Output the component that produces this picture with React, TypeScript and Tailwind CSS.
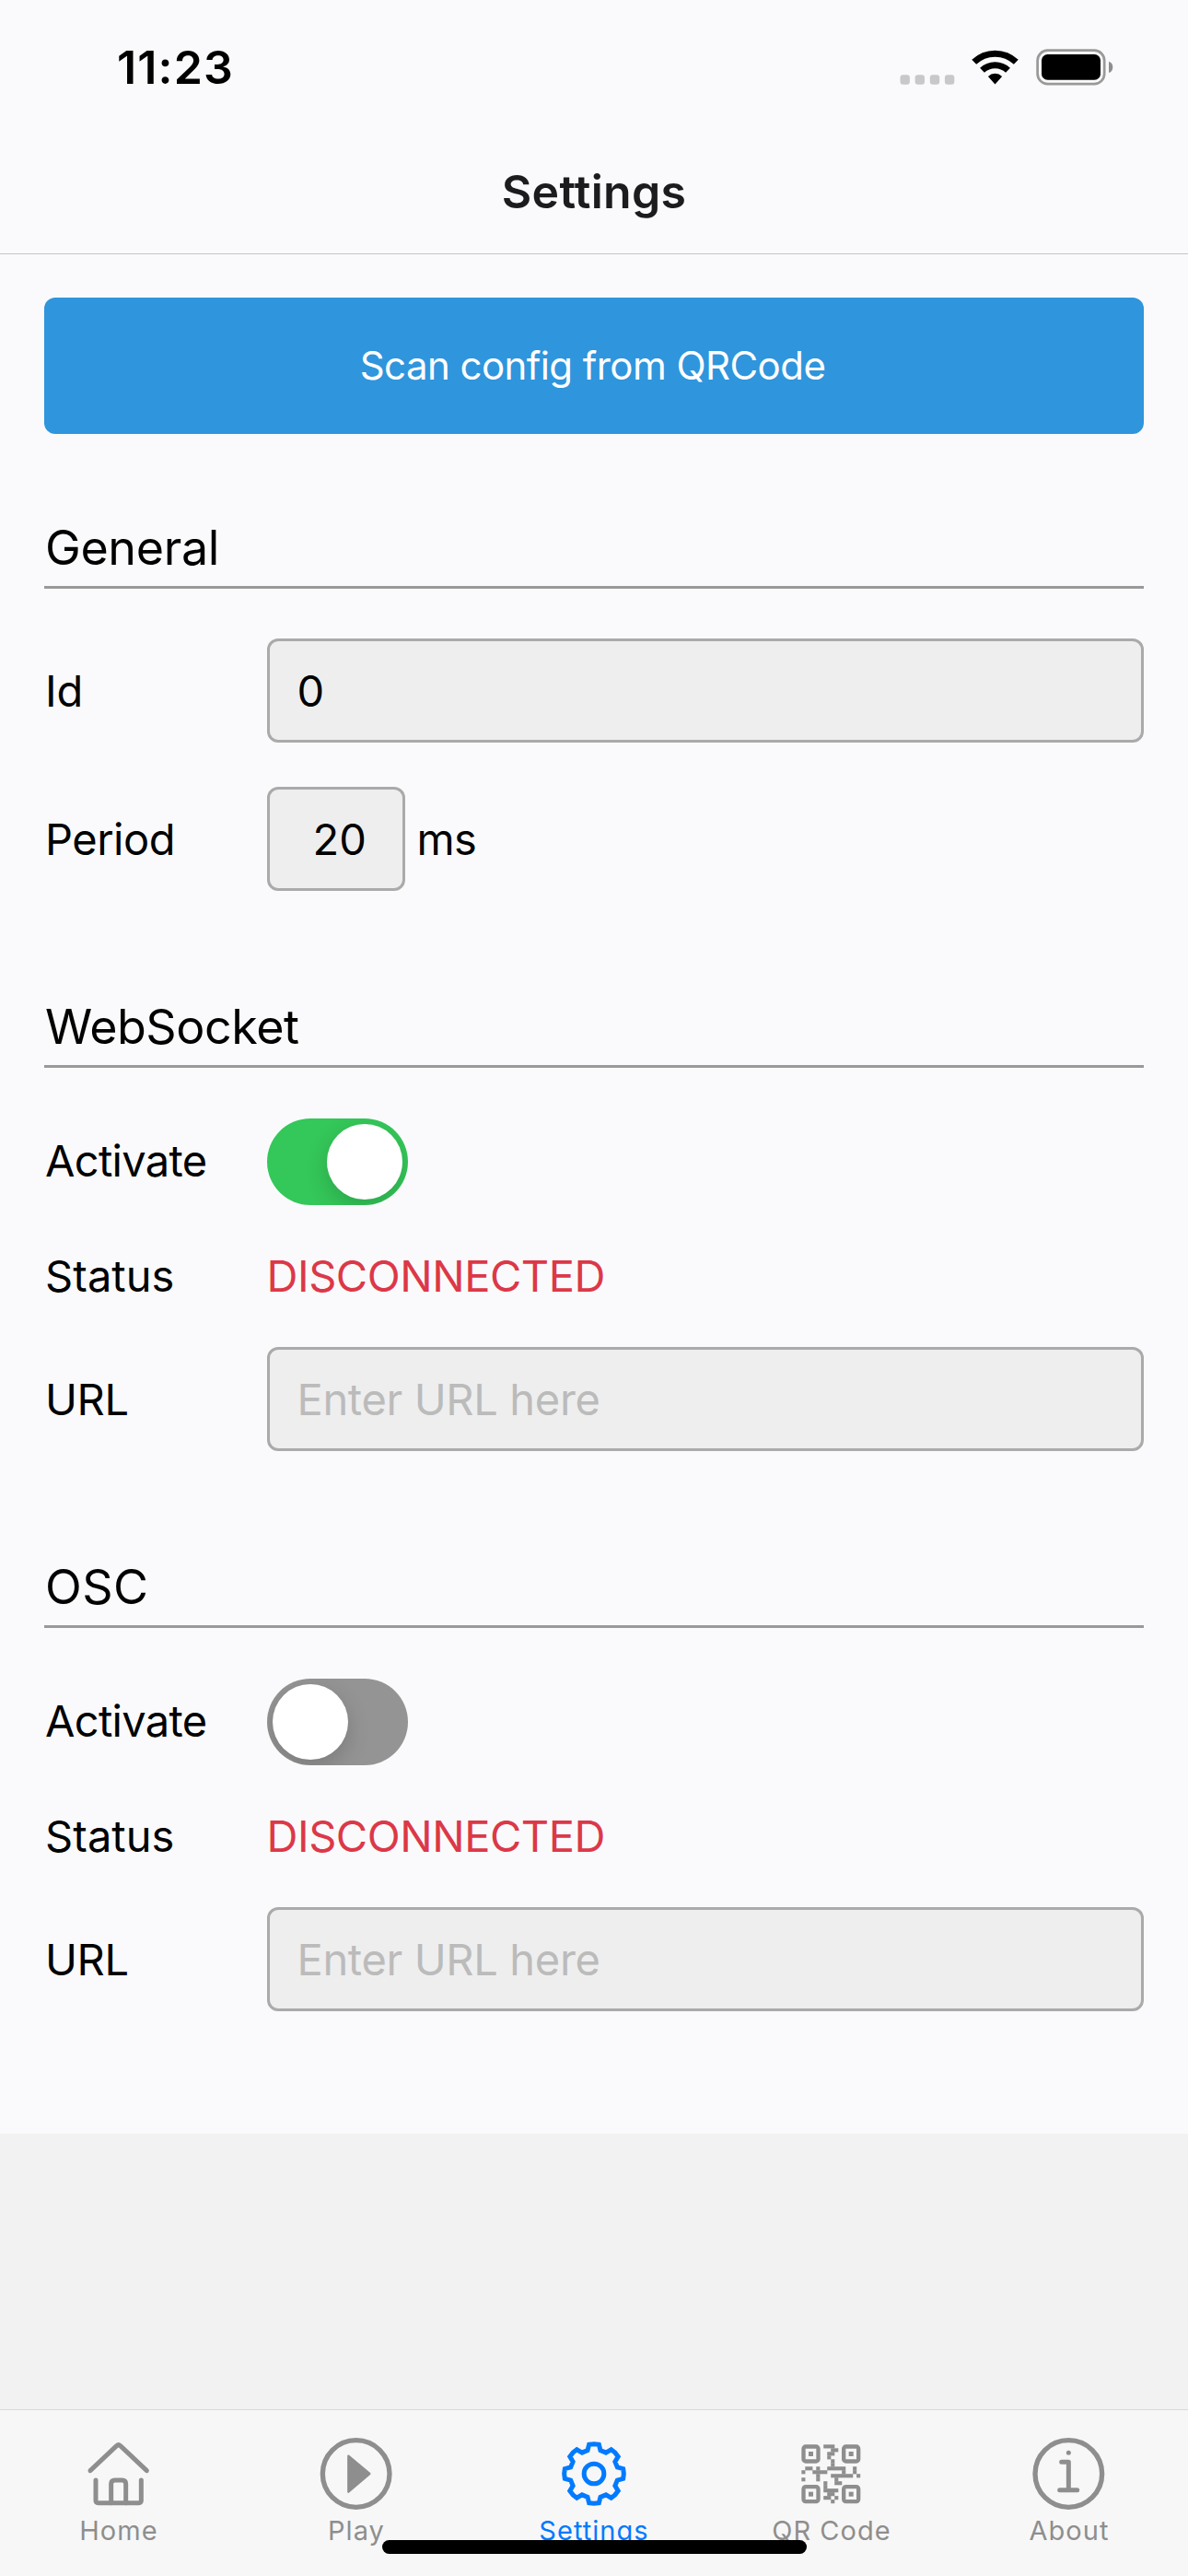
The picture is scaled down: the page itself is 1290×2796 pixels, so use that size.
import type { ReactNode } from "react";

function StatusIcons() {
  return (
    <svg width="232" height="40" viewBox="0 0 232 40" className="mb-px block">
      {[0.5, 16.6, 32.8, 48.9].map((x) => (
        <rect key={x} x={x} y="28.3" width="10.4" height="10.4" rx="3" fill="#c8c8ca" />
      ))}
      <g fill="none" stroke="#000" strokeWidth="7">
        <path d="M80.7 14.3A33 33 0 0 1 126.3 14.3" />
        <path d="M89.5 23.2A20.4 20.4 0 0 1 117.5 23.2" />
      </g>
      <path d="M95.9 29.9A11 11 0 0 1 111.1 29.9L103.5 38.5Z" fill="#000" />
      <rect x="149.6" y="1.7" width="72.6" height="36.4" rx="11" fill="none" stroke="#999" strokeWidth="2.7" />
      <rect x="154" y="6" width="64" height="27.7" rx="6.5" fill="#000" />
      <path d="M227 13.7a6.6 6.6 0 0 1 0 12.4Z" fill="#8e8e90" />
    </svg>
  );
}

function TabIcon({ children }: { children: ReactNode }) {
  return (
    <svg
      width="84"
      height="84"
      viewBox="-126 -126 252 252"
      className="block"
      fill="none"
      stroke="currentColor"
      strokeWidth="15"
      strokeLinecap="round"
      strokeLinejoin="round"
    >
      {children}
    </svg>
  );
}

function HomeIcon() {
  return (
    <TabIcon>
      <path d="M-93 -10L-7 -91Q-1 -97 5 -91L91 -10" />
      <path d="M-75 21V87Q-75 95 -67 95H65Q73 95 73 87V21" />
      <path d="M-25 95V33Q-25 21 -13 21H11Q23 21 23 33V95" />
    </TabIcon>
  );
}

function PlayIcon() {
  return (
    <TabIcon>
      <circle cx="-1" r="109" strokeWidth="16" />
      <path d="M-26 -58L43 0L-26 59Z" fill="currentColor" strokeWidth="7" />
    </TabIcon>
  );
}

const TOOTH = [
  [-21, -76],
  [-16, -95],
  [0, -97],
  [16, -95],
  [21, -76],
];

const GEAR_POINTS = Array.from({ length: 8 }, (_, i) => {
  const a = (i * Math.PI) / 4;
  return TOOTH.map(([x, y]) =>
    [x * Math.cos(a) - y * Math.sin(a), x * Math.sin(a) + y * Math.cos(a)]
      .map((v) => v.toFixed(1))
      .join(","),
  ).join(" ");
}).join(" ");

function GearIcon() {
  return (
    <TabIcon>
      <polygon points={GEAR_POINTS} strokeLinejoin="miter" />
      <circle r="32.500" />
    </TabIcon>
  );
}

const QR_FINDERS = [
  [0, 0],
  [131, 0],
  [0, 131],
  [131, 131],
];

// Runs of filled modules on the 16 x 16 grid: [row, first column, length]
const QR_RUNS = [
  [0, 6, 3],
  [1, 8, 2],
  [2, 7, 2],
  [3, 7, 1],
  [4, 8, 1],
  [5, 8, 1],
  [6, 1, 2],
  [6, 4, 1],
  [6, 7, 5],
  [6, 14, 1],
  [7, 0, 1],
  [7, 3, 4],
  [7, 11, 1],
  [7, 14, 1],
  [8, 4, 1],
  [8, 8, 6],
  [8, 15, 1],
  [9, 0, 1],
  [9, 4, 1],
  [9, 9, 1],
  [10, 6, 1],
  [10, 9, 2],
  [11, 6, 1],
  [12, 6, 4],
  [13, 7, 2],
  [14, 6, 2],
  [14, 9, 1],
  [15, 8, 1],
];

function QrIcon() {
  return (
    <TabIcon>
      <g transform="translate(-98 -95)">
        {QR_FINDERS.map(([x, y]) => (
          <g key={`${x}-${y}`} transform={`translate(${x} ${y})`}>
            <rect x="6.500" y="6.500" width="48" height="48" rx="7" strokeWidth="13" />
            <rect x="23" y="23" width="15" height="15" fill="currentColor" stroke="none" />
          </g>
        ))}
        {QR_RUNS.map(([row, col, len]) => (
          <rect
            key={`${row}-${col}`}
            x={col * 11.95}
            y={row * 11.95}
            width={len * 11.95 + 0.4}
            height="12.400"
            fill="currentColor"
            stroke="none"
          />
        ))}
      </g>
    </TabIcon>
  );
}

function InfoIcon() {
  return (
    <TabIcon>
      <g transform="translate(-2 0)">
        <circle r="109" strokeWidth="16" />
        <circle cy="-68" r="7.500" fill="currentColor" stroke="none" />
        <path d="M-23 -38H0V53M-29 53H28" />
      </g>
    </TabIcon>
  );
}

function Section({ title, tracking, children }: { title: string; tracking: string; children: ReactNode }) {
  return (
    <section className="flex flex-col">
      <h2
        className={`mb-[54px] flex h-[85px] items-center border-b-[3px] border-[#999] text-[52px] leading-none ${tracking}`}
      >
        {title}
      </h2>
      {children}
    </section>
  );
}

function Row({ label, tracking, children }: { label: string; tracking: string; children: ReactNode }) {
  return (
    <div className="flex items-center">
      <div className={`w-[241.5px] shrink-0 pb-px ${tracking}`}>{label}</div>
      {children}
    </div>
  );
}

const FIELD =
  "block h-[113px] rounded-[12px] border-[3px] border-[#aaa] bg-[#eee] leading-none outline-none placeholder:text-[#bbb] placeholder:opacity-100";

function Toggle({ on }: { on: boolean }) {
  return (
    <div
      className={`mt-[0.5px] -mb-[0.5px] flex h-[94px] w-[153.5px] items-center overflow-hidden rounded-full px-[6px] ${
        on ? "justify-end bg-[#34c759]" : "justify-start bg-[#949494]"
      }`}
    >
      <div className="size-[82px] rounded-full bg-white shadow-[0_9px_24px_rgba(0,0,0,0.17)]" />
    </div>
  );
}

function Connection({ title, tracking, on }: { title: string; tracking: string; on: boolean }) {
  return (
    <Section title={title} tracking={tracking}>
      <Row label="Activate" tracking="tracking-[-0.69px] pl-px">
        <Toggle on={on} />
      </Row>
      <div className="flex h-[155px] flex-col justify-center">
        <Row label="Status" tracking="tracking-[0.06px] pl-px">
          <div className="tracking-[-0.45px] text-[#dc3848]">DISCONNECTED</div>
        </Row>
      </div>
      <Row label="URL" tracking="tracking-[-0.36px] pl-px">
        <input
          className={`${FIELD} w-full min-w-0 flex-1 pl-[30px] tracking-[-0.34px]`}
          placeholder="Enter URL here"
        />
      </Row>
    </Section>
  );
}

function Tab({ label, icon, active }: { label: string; icon: ReactNode; active?: boolean }) {
  return (
    <div className={`flex w-[258px] flex-col items-center pt-[27px] ${active ? "text-[#007aff]" : "text-[#8e8e8e]"}`}>
      {icon}
      <div className="mt-[5px] text-[29px] leading-[30px] tracking-[1.05px]">{label}</div>
    </div>
  );
}

export default function App() {
  return (
    <div className="relative flex h-[2796px] w-[1290px] flex-col overflow-hidden bg-[#f2f2f2] font-['Inter',sans-serif] text-[47px] leading-none text-black">
      <header className="h-[276px] shrink-0 border-b border-[#c4c4c6] bg-[#fafafc]">
        <div className="flex h-[147px] items-center justify-between pr-[81px] pl-[127px]">
          <div className="pb-px text-[50px] font-semibold tracking-[1.16px]">11:23</div>
          <StatusIcons />
        </div>
        <h1 className="flex h-[122px] items-center justify-center text-[50px] font-semibold tracking-[0.27px] text-[#1c1c1e]">
          Settings
        </h1>
      </header>

      <main className="flex shrink-0 flex-col gap-[107px] bg-[#fafafc] px-[48px] pt-[47px] pb-[133px]">
        <button className="-mb-[24px] flex h-[148px] items-center justify-center rounded-[12px] bg-[#2f95dc] pr-[3px] text-[42px] leading-none tracking-[-0.56px] text-white">
          Scan config from QRCode
        </button>

        <Section title="General" tracking="tracking-[-0.37px] pl-px">
          <Row label="Id" tracking="tracking-[-0.12px] pl-px">
            <input className={`${FIELD} w-full min-w-0 flex-1 pl-[30px]`} defaultValue="0" />
          </Row>
          <div className="h-[48px]" />
          <Row label="Period" tracking="tracking-[-0.49px] pl-px">
            <input className={`${FIELD} w-[150px] pl-[47px]`} defaultValue="20" />
            <div className="ml-[13px] pb-px tracking-[-0.57px]">ms</div>
          </Row>
        </Section>

        <Connection title="WebSocket" tracking="tracking-[-0.46px] pl-px" on />
        <Connection title="OSC" tracking="tracking-[0.44px] pl-px" on={false} />
      </main>

      <div className="flex-1" />

      <nav className="flex h-[181px] shrink-0 border-t border-[#d9d9d9] bg-[#f7f7f7]">
        <Tab label="Home" icon={<HomeIcon />} />
        <Tab label="Play" icon={<PlayIcon />} />
        <Tab label="Settings" icon={<GearIcon />} active />
        <Tab label="QR Code" icon={<QrIcon />} />
        <Tab label="About" icon={<InfoIcon />} />
      </nav>

      <div className="absolute bottom-[24px] left-[415px] h-[15px] w-[461px] rounded-full bg-black" />
    </div>
  );
}
